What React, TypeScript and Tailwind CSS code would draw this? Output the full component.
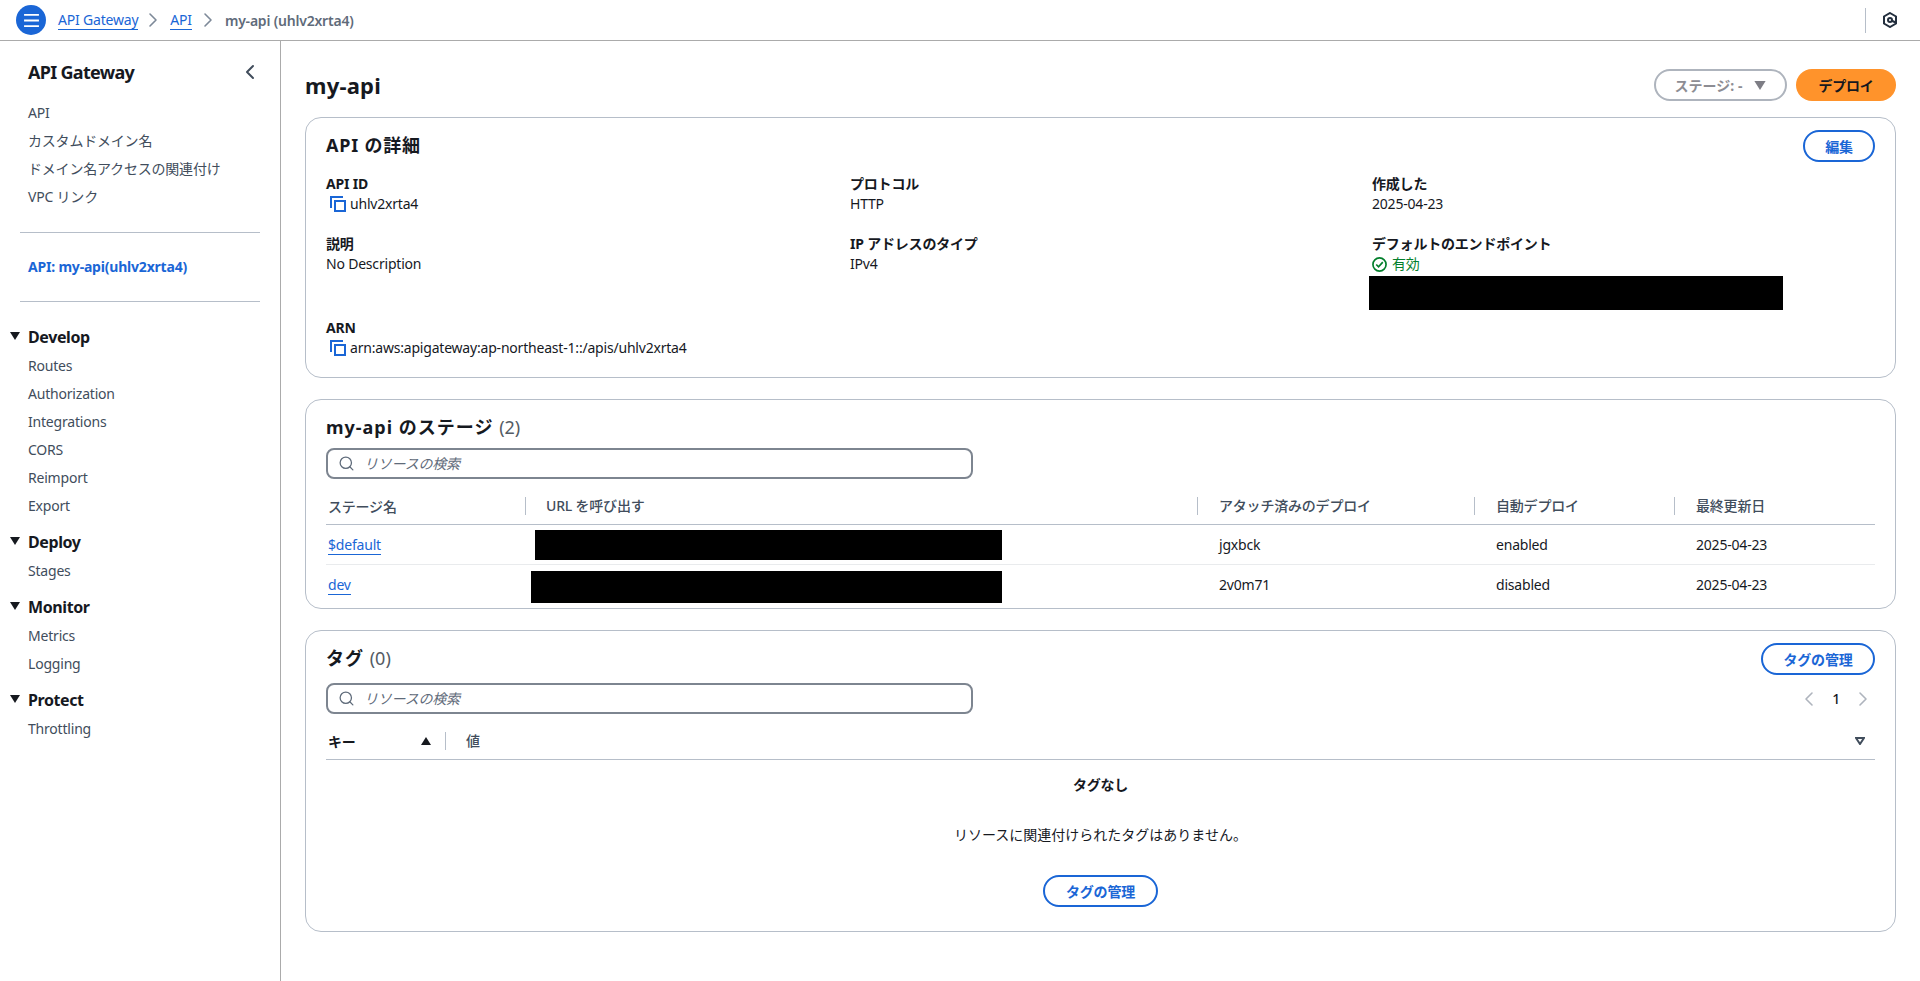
import { ChevronLeft, ChevronRight, Search } from 'lucide-react';

const navTop = ['API', 'カスタムドメイン名', 'ドメイン名アクセスの関連付け', 'VPC リンク'];

const navGroups = [
    { title: 'Develop', items: ['Routes', 'Authorization', 'Integrations', 'CORS', 'Reimport', 'Export'] },
    { title: 'Deploy', items: ['Stages'] },
    { title: 'Monitor', items: ['Metrics', 'Logging'] },
    { title: 'Protect', items: ['Throttling'] },
];

const stages = [
    { name: '$default', deploy: 'jgxbck', auto: 'enabled', rowClass: 'h-[40px] border-b border-[#e9ebed]', barClass: 'ml-[10px] w-[467px] h-[30px] mt-[5px]' },
    { name: 'dev', deploy: '2v0m71', auto: 'disabled', rowClass: 'h-[36px]', barClass: 'ml-[6px] w-[471px] h-[32px] mt-[6px]' },
];

function CopyIcon() {
    return (
        <svg viewBox="0 0 16 16" className="w-4 h-4 shrink-0" fill="none" stroke="#1a66d6" strokeWidth="2">
            <rect x="5" y="5" width="10" height="10" />
            <path d="M1 12V1h12" />
        </svg>
    );
}

function SearchBox() {
    return (
        <div className="flex items-center w-[647px] h-[31px] border-2 border-[#7d8590] rounded-lg pl-[10px]">
            <Search size={17} strokeWidth={1.8} className="text-[#5f6b7a]" />
            <span className="ml-[9px] text-[14px] italic text-[#5f6b7a]">リソースの検索</span>
        </div>
    );
}

function PillButton({ label, className }: { label: string; className: string }) {
    return (
        <button className={`flex items-center justify-center h-[32px] rounded-full border-2 border-[#1a66d6] text-[14px] font-bold text-[#1a66d6] ${className}`}>
            {label}
        </button>
    );
}

function Field({ label, children }: { label: string; children: React.ReactNode }) {
    return (
        <div>
            <div className="h-[20px] leading-[20px] font-bold text-[14px]">{label}</div>
            <div className="min-h-[20px] leading-[20px] text-[14px]">{children}</div>
        </div>
    );
}

function Sidebar() {
    return (
        <aside className="w-[281px] shrink-0 border-r border-[#ababab] pt-[19px]">
            <div className="flex items-center justify-between h-[24px] pl-[28px] pr-[18px]">
                <span className="text-[18px] font-bold tracking-[-0.7px]">API Gateway</span>
                <ChevronLeft size={24} strokeWidth={2} className="text-[#414d5c]" />
            </div>
            <ul className="mt-[15px] pl-[28px] text-[14px] text-[#414d5c]">
                {navTop.map((item) => (
                    <li key={item} className="h-[28px] leading-[28px]">{item}</li>
                ))}
            </ul>
            <div className="mx-[20px] mt-[21px] border-t border-[#b6bec9]" />
            <div className="mt-[24px] pl-[28px] h-[20px] leading-[20px] text-[14px] font-bold text-[#1a66d6]">API: my-api(uhlv2xrta4)</div>
            <div className="mx-[20px] mt-[24px] border-t border-[#b6bec9]" />
            <div className="mt-[23px]">
                {navGroups.map((group) => (
                    <div key={group.title} className="mb-[10px]">
                        <div className="flex items-center h-[24px]">
                            <svg viewBox="0 0 10 8" className="w-[10px] h-[8px] ml-[10px] mr-[8px] mb-[2px]">
                                <path d="M0 0h10L5 8z" fill="#16191f" />
                            </svg>
                            <span className="text-[16px] font-bold tracking-[-0.4px]">{group.title}</span>
                        </div>
                        <ul className="mt-[3px] pl-[28px] text-[14px] text-[#414d5c]">
                            {group.items.map((item) => (
                                <li key={item} className="h-[28px] leading-[28px]">{item}</li>
                            ))}
                        </ul>
                    </div>
                ))}
            </div>
        </aside>
    );
}

export default function App() {
    return (
        <div className="h-screen flex flex-col overflow-hidden bg-white text-[#16191f] tracking-[-0.2px] [font-family:'Noto_Sans','Noto_Sans_CJK_JP',sans-serif]">
            {/* top bar */}
            <header className="flex items-center h-[41px] shrink-0 border-b border-[#ababab] pl-[16px] pr-[22px]">
                <div className="flex items-center justify-center w-[30px] h-[30px] rounded-full bg-[#1a66d6]">
                    <svg viewBox="0 0 16 14" className="w-[15px] h-[13px]" stroke="#fff" strokeWidth="2">
                        <path d="M0 1h16M0 7h16M0 13h16" />
                    </svg>
                </div>
                <a className="ml-[12px] text-[14px] text-[#1a66d6] border-b border-[#1a66d6] leading-[18px]">API Gateway</a>
                <ChevronRight size={24} strokeWidth={1.6} className="ml-[3px] mr-[5px] text-[#7d8998]" />
                <a className="text-[14px] text-[#1a66d6] border-b border-[#1a66d6] leading-[18px]">API</a>
                <ChevronRight size={24} strokeWidth={1.6} className="ml-[4px] mr-[5px] text-[#7d8998]" />
                <span className="text-[14px] font-semibold text-[#5f6b7a]">my-api (uhlv2xrta4)</span>
                <div className="ml-auto w-px h-[25px] bg-[#b6bec9]" />
                <svg viewBox="0 0 16 16" className="ml-[16px] w-[16px] h-[16px]" fill="none" stroke="#232f3e" strokeWidth="2">
                    <path d="M8 1l6 3.5v7L8 15l-6-3.5v-7z" />
                    <circle cx="8" cy="8" r="2" />
                    <path d="M9.5 8.5l4 2" />
                </svg>
            </header>

            <div className="flex flex-1 min-h-0">
                <Sidebar />

                <main className="flex-1 min-w-0 pl-[24px] pr-[24px] pt-[28px]">
                    <div className="flex items-center h-[32px]">
                        <h1 className="text-[22px] font-bold tracking-[0.2px]">my-api</h1>
                        <button className="ml-auto flex items-center justify-center gap-[12px] w-[133px] h-[32px] rounded-full border-2 border-[#aeb4bd] text-[14px] font-bold tracking-normal text-[#8d8d93]">
                            ステージ: -
                            <svg viewBox="0 0 10 8" className="w-[12px] h-[9px]">
                                <path d="M0 0h10L5 8z" fill="#7d7d85" />
                            </svg>
                        </button>
                        <button className="ml-[9px] w-[100px] h-[32px] rounded-full bg-[#ff932b] text-[14px] font-bold">デプロイ</button>
                    </div>

                    {/* details */}
                    <section className="mt-[16px] h-[261px] border border-[#b6bec9] rounded-2xl pt-[12px] px-[20px]">
                        <div className="flex items-center justify-between h-[32px]">
                            <h2 className="-mt-[2px] text-[18px] font-bold tracking-[0.8px]">API の詳細</h2>
                            <PillButton label="編集" className="w-[72px]" />
                        </div>
                        <div className="grid grid-cols-[524px_522px_1fr] mt-[12px]">
                            <div className="pb-[20px]">
                                <Field label="API ID">
                                    <div className="flex items-center gap-[4px] pl-[4px]">
                                        <CopyIcon />
                                        <span>uhlv2xrta4</span>
                                    </div>
                                </Field>
                            </div>
                            <div className="pb-[20px]">
                                <Field label="プロトコル">HTTP</Field>
                            </div>
                            <div className="pb-[20px]">
                                <Field label="作成した">2025-04-23</Field>
                            </div>
                            <div className="pb-[8px]">
                                <Field label="説明">No Description</Field>
                            </div>
                            <div className="pb-[8px]">
                                <Field label="IP アドレスのタイプ">IPv4</Field>
                            </div>
                            <div className="pb-[8px]">
                                <Field label="デフォルトのエンドポイント">
                                    <div className="flex items-center gap-[5px] text-[#037f2c]">
                                        <svg viewBox="0 0 16 16" className="w-[15px] h-[15px]" fill="none" stroke="#037f2c" strokeWidth="1.8">
                                            <circle cx="8" cy="8" r="7" />
                                            <path d="M4.5 8l2.5 2.5 4.5-5" />
                                        </svg>
                                        <span>有効</span>
                                    </div>
                                    <div className="-ml-[3px] mt-[2px] w-[414px] h-[34px] bg-black" />
                                </Field>
                            </div>
                            <div className="col-span-3">
                                <Field label="ARN">
                                    <div className="flex items-center gap-[4px] pl-[4px]">
                                        <CopyIcon />
                                        <span>arn:aws:apigateway:ap-northeast-1::/apis/uhlv2xrta4</span>
                                    </div>
                                </Field>
                            </div>
                        </div>
                    </section>

                    {/* stages */}
                    <section className="mt-[21px] h-[210px] border border-[#b6bec9] rounded-2xl pt-[15px] px-[20px]">
                        <h2 className="h-[24px] leading-[24px] text-[18px] font-bold tracking-[1px]">
                            my-api のステージ <span className="font-normal tracking-normal text-[#545b64]">(2)</span>
                        </h2>
                        <div className="mt-[9px]">
                            <SearchBox />
                        </div>
                        <div className="grid grid-cols-[199px_672px_277px_200px_1fr] mt-[9px] h-[37px] border-b border-[#b6bec9] items-center text-[14px] font-medium text-[#414d5c]">
                            <div className="pl-[2px]">ステージ名</div>
                            <div className="h-[18px] leading-[18px] border-l border-[#b6bec9] pl-[20px]">URL を呼び出す</div>
                            <div className="h-[18px] leading-[18px] border-l border-[#b6bec9] pl-[21px]">アタッチ済みのデプロイ</div>
                            <div className="h-[18px] leading-[18px] border-l border-[#b6bec9] pl-[21px]">自動デプロイ</div>
                            <div className="h-[18px] leading-[18px] border-l border-[#b6bec9] pl-[21px]">最終更新日</div>
                        </div>
                        {stages.map((stage) => (
                            <div
                                key={stage.name}
                                className={`grid grid-cols-[199px_672px_277px_200px_1fr] items-center text-[14px] ${stage.rowClass}`}
                            >
                                <div className="pl-[2px]">
                                    <a className="text-[#1a66d6] border-b border-[#1a66d6] leading-[18px]">{stage.name}</a>
                                </div>
                                <div className="self-start">
                                    <div className={`bg-black ${stage.barClass}`} />
                                </div>
                                <div className="pl-[22px]">{stage.deploy}</div>
                                <div className="pl-[22px]">{stage.auto}</div>
                                <div className="pl-[22px]">2025-04-23</div>
                            </div>
                        ))}
                    </section>

                    {/* tags */}
                    <section className="mt-[21px] h-[302px] border border-[#b6bec9] rounded-2xl pt-[12px] px-[20px]">
                        <div className="flex items-center justify-between h-[32px]">
                            <h2 className="-mt-[1px] text-[18px] font-bold tracking-[1px]">
                                タグ <span className="font-normal tracking-normal text-[#545b64]">(0)</span>
                            </h2>
                            <PillButton label="タグの管理" className="w-[114px]" />
                        </div>
                        <div className="flex items-center justify-between mt-[8px]">
                            <SearchBox />
                            <div className="flex items-center text-[14px]">
                                <ChevronLeft size={24} strokeWidth={1.6} className="text-[#aeb4bd]" />
                                <span className="mx-[11px] font-medium">1</span>
                                <ChevronRight size={24} strokeWidth={1.6} className="text-[#aeb4bd]" />
                            </div>
                        </div>
                        <div className="grid grid-cols-[119px_1fr] mt-[9px] h-[37px] border-b border-[#b6bec9] items-center text-[14px] font-medium">
                            <div className="flex items-center justify-between pl-[2px] pr-[14px] font-bold">
                                キー
                                <svg viewBox="0 0 10 8" className="w-[10px] h-[8px]">
                                    <path d="M0 8h10L5 0z" fill="#16191f" />
                                </svg>
                            </div>
                            <div className="flex items-center justify-between h-[18px] leading-[18px] border-l border-[#b6bec9] pl-[20px] pr-[10px] text-[#414d5c]">
                                値
                                <svg viewBox="0 0 10 8" className="w-[10px] h-[8px]" fill="none" stroke="#414d5c" strokeWidth="2">
                                    <path d="M1 1h8L5 7z" />
                                </svg>
                            </div>
                        </div>
                        <div className="flex flex-col items-center pt-[15px] text-[14px]">
                            <div className="h-[20px] leading-[20px] font-bold">タグなし</div>
                            <div className="mt-[30px] h-[20px] leading-[20px] tracking-normal">リソースに関連付けられたタグはありません。</div>
                            <PillButton label="タグの管理" className="w-[115px] mt-[30px]" />
                        </div>
                    </section>
                </main>
            </div>
        </div>
    );
}
